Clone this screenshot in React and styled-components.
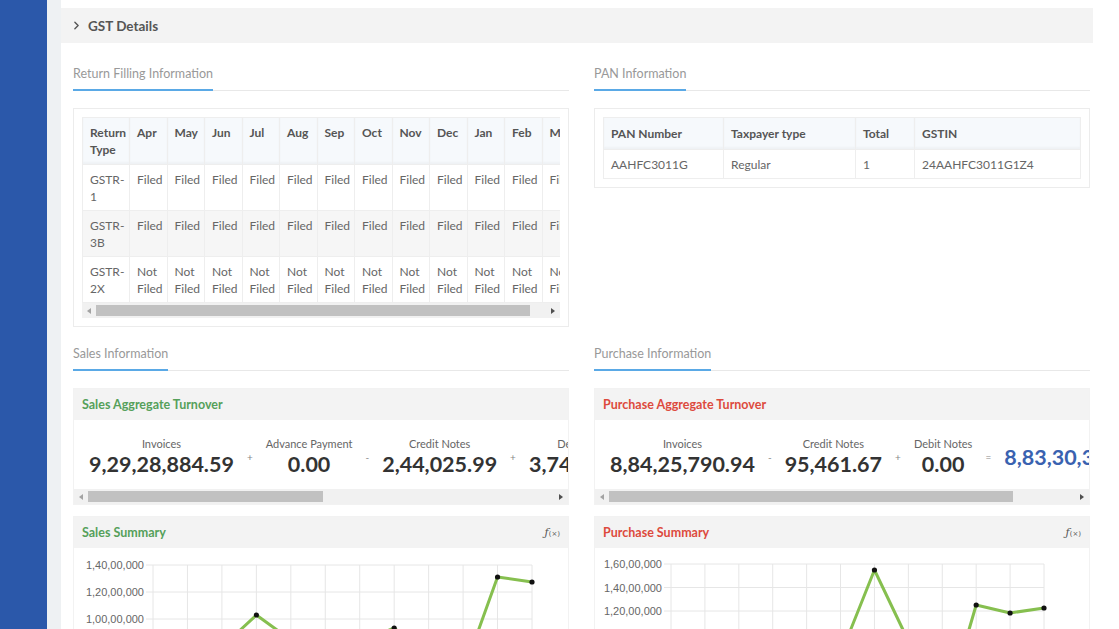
import React from 'react';
import styled, { createGlobalStyle } from 'styled-components';
import { ChevronRight } from 'lucide-react';

const COLOR = {
  SIDEBAR: '#2b58aa',
  GUTTER: '#eef1f3',
  PANEL_HEAD: '#f3f3f3',
  TEXT_DARK: '#333333',
  TEXT: '#555555',
  TEXT_LIGHT: '#666666',
  TEXT_MUTED: '#999999',
  BORDER: '#ececec',
  TAB_BLUE: '#5aa9e6',
  GREEN: '#55a05a',
  RED: '#dd4a3d',
  BLUE: '#3a62b0',
  LINE: '#86bf4f',
};

const GlobalStyle = createGlobalStyle`
  html, body {
    margin: 0;
    padding: 0;
    overflow: hidden;
    background: #fff;
    font-family: Lato, "Open Sans", sans-serif;
  }
  * { box-sizing: border-box; }
`;

const Page = styled.div`
  display: flex;
  min-height: 100vh;
`;

const Sidebar = styled.aside`
  width: 47px;
  flex-shrink: 0;
  background: ${COLOR.SIDEBAR};
`;

const Gutter = styled.div`
  width: 14px;
  flex-shrink: 0;
  background: ${COLOR.GUTTER};
`;

const Main = styled.main`
  flex: 1;
  min-width: 0;
  padding: 8px 26px 0 0;
`;

const PanelHeader = styled.div`
  height: 35px;
  display: flex;
  align-items: center;
  gap: 5px;
  padding-left: 9px;
  background: ${COLOR.PANEL_HEAD};
  color: ${COLOR.TEXT};
  font-size: 13.5px;
  font-weight: 700;
`;

const PanelBody = styled.div`
  display: grid;
  grid-template-columns: 496px 496px;
  column-gap: 25px;
  row-gap: 18px;
  align-items: start;
  padding: 22px 3px 0 12px;
`;

const Section = styled.section`
  display: flex;
  flex-direction: column;
`;

const TabBar = styled.div`
  display: flex;
  border-bottom: 1px solid #e8e8e8;
  margin-bottom: 17px;
`;

const Tab = styled.span`
  font-size: 12.5px;
  line-height: 18px;
  color: ${COLOR.TEXT_MUTED};
  padding-bottom: 6px;
  border-bottom: 2px solid ${COLOR.TAB_BLUE};
  margin-bottom: -1px;
`;

const TableCard = styled.div`
  border: 1px solid ${COLOR.BORDER};
  padding: 8px;
`;

const Clip = styled.div`
  overflow: hidden;
`;

const Table = styled.table`
  border-collapse: collapse;
  table-layout: fixed;
  width: ${(p) => p.$width}px;
  font-size: 12px;
  line-height: ${(p) => p.$line}px;

  th, td {
    border: 1px solid #eeeeee;
    text-align: left;
    vertical-align: top;
    white-space: normal;
  }
  th {
    padding: ${(p) => p.$headPad};
    background: #f6f9fc;
    color: ${COLOR.TEXT};
    font-weight: 700;
    box-shadow: inset 0 -2px 2px rgba(0, 0, 0, 0.03);
  }
  td {
    padding: ${(p) => p.$cellPad};
    color: ${COLOR.TEXT_LIGHT};
  }
  tbody tr:nth-child(even) td {
    background: #f6f6f6;
  }
`;

const ScrollTrack = styled.div`
  display: flex;
  align-items: center;
  height: 15px;
  background: #f1f1f1;
`;

const ScrollButton = styled.span`
  width: 14px;
  flex-shrink: 0;
  display: flex;
  justify-content: center;
  &::before {
    content: '';
    border-top: 3px solid transparent;
    border-bottom: 3px solid transparent;
    ${(p) =>
      p.$dir === 'left'
        ? 'border-right: 4px solid #a3a3a3;'
        : 'border-left: 4px solid #505050;'}
  }
`;

const ScrollRail = styled.div`
  flex: 1;
  height: 100%;
  display: flex;
  align-items: center;
`;

const ScrollThumb = styled.div`
  height: 11px;
  background: #c1c1c1;
`;

function ScrollBar({ thumb }) {
  return (
    <ScrollTrack>
      <ScrollButton $dir="left" />
      <ScrollRail>
        <ScrollThumb style={{ width: thumb }} />
      </ScrollRail>
      <ScrollButton $dir="right" />
    </ScrollTrack>
  );
}

const Card = styled.div`
  border: 1px solid #f2f2f2;
  margin-bottom: 11px;
`;

const CardHeader = styled.div`
  height: 31px;
  display: flex;
  align-items: center;
  justify-content: space-between;
  padding: 0 8px 1px 8px;
  background: ${COLOR.PANEL_HEAD};
`;

const CardTitle = styled.h4`
  margin: 0;
  font-size: 12.5px;
  font-weight: 700;
  color: ${(p) => (p.$tone === 'red' ? COLOR.RED : COLOR.GREEN)};
`;

const FxIcon = styled.span`
  font-family: "DejaVu Serif", serif;
  font-style: italic;
  font-size: 11px;
  color: ${COLOR.TEXT};
  small {
    font-style: normal;
    font-size: 7px;
  }
`;

const AggRow = styled.div`
  display: flex;
  align-items: center;
  gap: 13px;
  padding: 16px 15px 11px;
  white-space: nowrap;
  overflow: hidden;
`;

const AggItem = styled.div`
  display: flex;
  flex-direction: column;
  align-items: center;
  flex-shrink: 0;
`;

const AggLabel = styled.span`
  font-size: 11px;
  line-height: 15px;
  color: ${COLOR.TEXT_LIGHT};
`;

const AggValue = styled.span`
  font-size: 21.5px;
  font-weight: 700;
  line-height: 27px;
  color: ${(p) => (p.$accent ? COLOR.BLUE : COLOR.TEXT_DARK)};
`;

const Operator = styled.span`
  font-size: 10px;
  line-height: 10px;
  color: #888;
  flex-shrink: 0;
`;

const ChartBox = styled.div`
  height: 240px;
`;

const MONTHS = ['Apr', 'May', 'Jun', 'Jul', 'Aug', 'Sep', 'Oct', 'Nov', 'Dec', 'Jan', 'Feb', 'Mar'];

const RETURNS = [
  { type: 'GSTR-1', status: 'Filed' },
  { type: 'GSTR-3B', status: 'Filed' },
  { type: 'GSTR-2X', status: 'Not Filed' },
];

function indian(n) {
  const s = String(n);
  if (s.length <= 3) return s;
  const last = s.slice(-3);
  let rest = s.slice(0, -3);
  const parts = [];
  while (rest.length > 2) {
    parts.unshift(rest.slice(-2));
    rest = rest.slice(0, -2);
  }
  if (rest) parts.unshift(rest);
  return `${parts.join(',')},${last}`;
}

function LineChart({ axisX, endX, topY, step, maxValue, points }) {
  const lines = maxValue / 2000000 + 1;
  const colW = (endX - axisX) / 11;
  const bottom = topY + step * (lines - 1);
  const coords = points.map((y, i) => [axisX + i * colW, y]);
  return (
    <svg width="496" height="240">
      {MONTHS.map((m, i) => (
        <line
          key={m}
          x1={axisX + i * colW}
          x2={axisX + i * colW}
          y1={topY}
          y2={bottom + 6}
          stroke="#e6e6e6"
        />
      ))}
      {Array.from({ length: lines }, (_, i) => {
        const y = topY + i * step;
        return (
          <g key={i}>
            <line x1={axisX - 7} x2={endX} y1={y} y2={y} stroke="#e6e6e6" />
            <text
              x={axisX - 9}
              y={y + 4}
              textAnchor="end"
              fontFamily="Liberation Sans, Arial, sans-serif"
              fontSize="11"
              fill="#666"
            >
              {indian(maxValue - i * 2000000)}
            </text>
          </g>
        );
      })}
      <polyline
        points={coords.map((c) => c.join(',')).join(' ')}
        fill="none"
        stroke={COLOR.LINE}
        strokeWidth="3"
        strokeLinejoin="round"
      />
      {coords.map(([x, y], i) => (
        <circle key={i} cx={x} cy={y} r="2.6" fill="#111" />
      ))}
    </svg>
  );
}

function SectionBlock({ title, children }) {
  return (
    <Section>
      <TabBar>
        <Tab>{title}</Tab>
      </TabBar>
      {children}
    </Section>
  );
}

function AggregateCard({ title, tone, items, result, thumb }) {
  return (
    <Card>
      <CardHeader>
        <CardTitle $tone={tone}>{title}</CardTitle>
      </CardHeader>
      <AggRow>
        {items.map((item, i) => (
          <React.Fragment key={item.label}>
            {i > 0 && <Operator>{item.op}</Operator>}
            <AggItem>
              <AggLabel>{item.label}</AggLabel>
              <AggValue>{item.value}</AggValue>
            </AggItem>
          </React.Fragment>
        ))}
        <Operator>=</Operator>
        <AggItem>
          <AggValue $accent>{result}</AggValue>
        </AggItem>
      </AggRow>
      <ScrollBar thumb={thumb} />
    </Card>
  );
}

function SummaryCard({ title, tone, chart }) {
  return (
    <Card>
      <CardHeader>
        <CardTitle $tone={tone}>{title}</CardTitle>
        <FxIcon>
          ƒ<small>(×)</small>
        </FxIcon>
      </CardHeader>
      <ChartBox>
        <LineChart {...chart} />
      </ChartBox>
    </Card>
  );
}

export default function App() {
  return (
    <Page>
      <GlobalStyle />
      <Sidebar />
      <Gutter />
      <Main>
        <PanelHeader>
          <ChevronRight size={13} strokeWidth={2.6} />
          GST Details
        </PanelHeader>
        <PanelBody>
          <SectionBlock title="Return Filling Information">
            <TableCard>
              <Clip>
                <Table $width={497} $line={16.5} $headPad="7px 7px 6px" $cellPad="7px 7px 5px">
                  <colgroup>
                    <col style={{ width: 47 }} />
                    {MONTHS.map((m) => (
                      <col key={m} style={{ width: 37.5 }} />
                    ))}
                  </colgroup>
                  <thead>
                    <tr>
                      <th>Return Type</th>
                      {MONTHS.map((m) => (
                        <th key={m}>{m}</th>
                      ))}
                    </tr>
                  </thead>
                  <tbody>
                    {RETURNS.map((r) => (
                      <tr key={r.type}>
                        <td>{r.type}</td>
                        {MONTHS.map((m) => (
                          <td key={m}>{r.status}</td>
                        ))}
                      </tr>
                    ))}
                  </tbody>
                </Table>
              </Clip>
              <ScrollBar thumb={434} />
            </TableCard>
          </SectionBlock>

          <SectionBlock title="PAN Information">
            <TableCard>
              <Table $width={477} $line={17} $headPad="7px" $cellPad="6px 7px 5px">
                <colgroup>
                  <col style={{ width: 120 }} />
                  <col style={{ width: 132 }} />
                  <col style={{ width: 59 }} />
                  <col style={{ width: 166 }} />
                </colgroup>
                <thead>
                  <tr>
                    <th>PAN Number</th>
                    <th>Taxpayer type</th>
                    <th>Total</th>
                    <th>GSTIN</th>
                  </tr>
                </thead>
                <tbody>
                  <tr>
                    <td>AAHFC3011G</td>
                    <td>Regular</td>
                    <td>1</td>
                    <td>24AAHFC3011G1Z4</td>
                  </tr>
                </tbody>
              </Table>
            </TableCard>
          </SectionBlock>

          <SectionBlock title="Sales Information">
            <AggregateCard
              title="Sales Aggregate Turnover"
              tone="green"
              thumb={235}
              items={[
                { label: 'Invoices', value: '9,29,28,884.59' },
                { label: 'Advance Payment', value: '0.00', op: '+' },
                { label: 'Credit Notes', value: '2,44,025.99', op: '-' },
                { label: 'Debit Notes', value: '3,74,512.40', op: '+' },
              ]}
              result="9,30,59,371.00"
            />
            <SummaryCard
              title="Sales Summary"
              tone="green"
              chart={{
                axisX: 79,
                endX: 458,
                topY: 17,
                step: 27,
                maxValue: 14000000,
                points: [120, 110, 99, 67, 92, 100, 95, 80, 110, 125, 29, 34],
              }}
            />
          </SectionBlock>

          <SectionBlock title="Purchase Information">
            <AggregateCard
              title="Purchase Aggregate Turnover"
              tone="red"
              thumb={404}
              items={[
                { label: 'Invoices', value: '8,84,25,790.94' },
                { label: 'Credit Notes', value: '95,461.67', op: '-' },
                { label: 'Debit Notes', value: '0.00', op: '+' },
              ]}
              result="8,83,30,329.27"
            />
            <SummaryCard
              title="Purchase Summary"
              tone="red"
              chart={{
                axisX: 76,
                endX: 449,
                topY: 16,
                step: 23.5,
                maxValue: 16000000,
                points: [150, 140, 160, 145, 130, 107, 22, 93, 173, 57, 65, 60],
              }}
            />
          </SectionBlock>
        </PanelBody>
      </Main>
    </Page>
  );
}
